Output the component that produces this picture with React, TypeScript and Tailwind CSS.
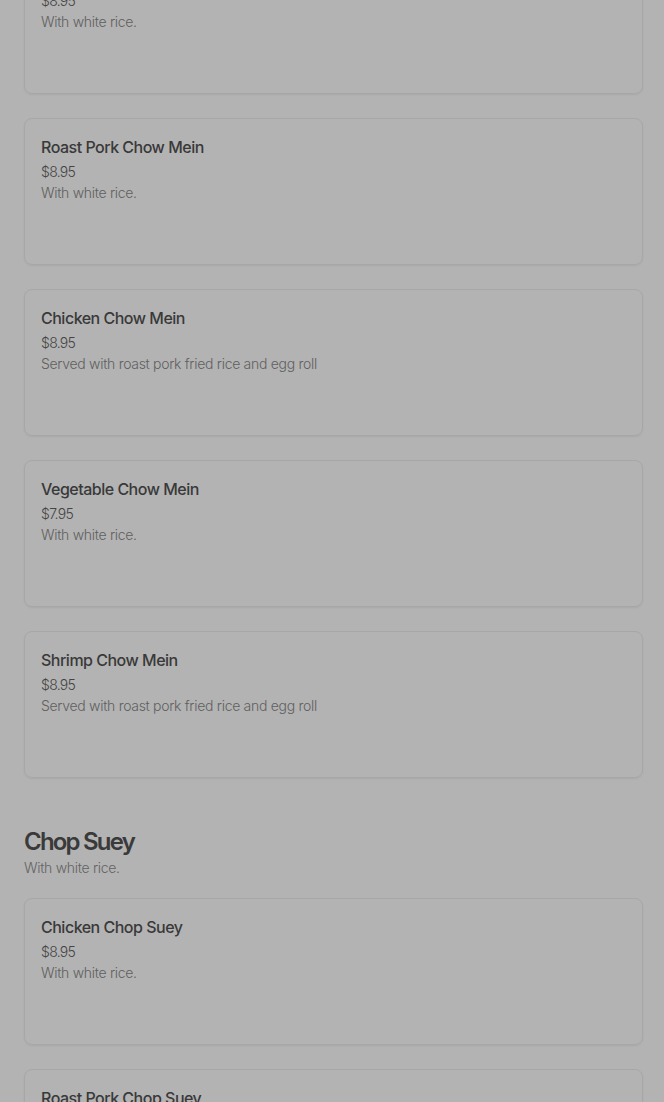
import type { JSX } from "react";

type Dish = {
  name: string;
  price: string;
  note: string;
};

const WHITE_RICE = "With white rice.";
const COMBO = "Served with roast pork fried rice and egg roll";

const CHOW_MEIN: Dish[] = [
  { name: "Beef Chow Mein", price: "$8.95", note: WHITE_RICE },
  { name: "Roast Pork Chow Mein", price: "$8.95", note: WHITE_RICE },
  { name: "Chicken Chow Mein", price: "$8.95", note: COMBO },
  { name: "Vegetable Chow Mein", price: "$7.95", note: WHITE_RICE },
  { name: "Shrimp Chow Mein", price: "$8.95", note: COMBO },
];

const CHOP_SUEY: Dish[] = [
  { name: "Chicken Chop Suey", price: "$8.95", note: WHITE_RICE },
  { name: "Roast Pork Chop Suey", price: "$8.95", note: WHITE_RICE },
];

/**
 * 料理カード
 */
const DishCard = ({ dish }: { dish: Dish }): JSX.Element => (
  <div className="h-[147px] rounded-lg border border-[#a7a7a7] shadow-[0_1px_2px_rgba(0,0,0,0.06)] px-4 pt-4">
    <h3 className="text-[16px] leading-6 font-medium tracking-[-0.5px] text-[#393939]">
      {dish.name}
    </h3>
    <p className="mt-[3px] text-[14px] leading-5 font-light tracking-[-0.7px] text-[#444444]">
      {dish.price}
    </p>
    <p className="text-[14px] leading-[22px] font-light tracking-[-0.3px] text-[#606060]">
      {dish.note}
    </p>
  </div>
);

export default function App(): JSX.Element {
  return (
    <div
      className="min-h-[1102px] h-[1102px] overflow-hidden bg-[#b3b3b3] pl-6 pr-[21px]"
      style={{ fontFamily: "Inter, 'Noto Sans', sans-serif" }}
    >
      {/* スクロール位置：前のカードの途中から */}
      <div className="-mt-[53px] flex flex-col gap-6">
        {CHOW_MEIN.map((d) => (
          <DishCard key={d.name} dish={d} />
        ))}
      </div>

      <section className="mt-12">
        <h2 className="text-[24px] leading-8 font-semibold tracking-[-1.8px] text-[#3a3a3a]">
          Chop Suey
        </h2>
        <p className="text-[14px] leading-5 font-light tracking-[-0.3px] text-[#636363]">
          {WHITE_RICE}
        </p>
        <div className="mt-5 flex flex-col gap-6">
          {CHOP_SUEY.map((d) => (
            <DishCard key={d.name} dish={d} />
          ))}
        </div>
      </section>
    </div>
  );
}
